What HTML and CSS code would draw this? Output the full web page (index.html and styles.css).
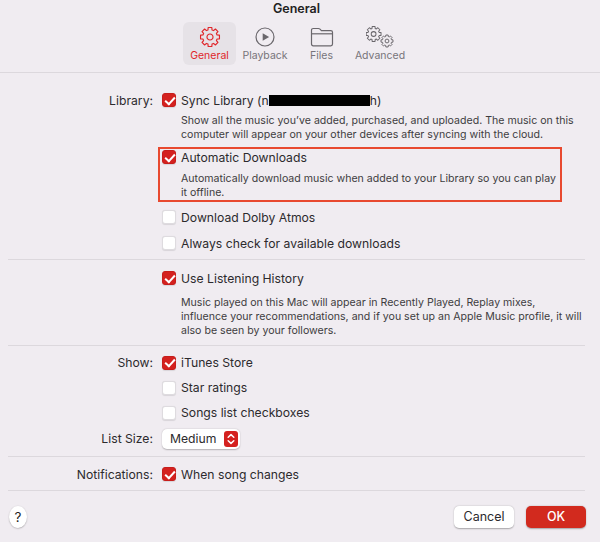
FILE: index.html
```html
<!DOCTYPE html>
<html lang="en">
<head>
<meta charset="utf-8">
<title>General</title>
<link rel="stylesheet" href="styles.css">
</head>
<body>
<div class="window">
  <header class="toolbar">
    <div class="title">General</div>
    <nav class="tabs">
      <div class="tab tab-general active">
        <svg class="tab-icon" viewBox="0 0 24 24" width="22" height="22" fill="none" stroke="currentColor" stroke-width="1.25" stroke-linejoin="round"><g transform="translate(12 12)"><polygon points="-2.2,-7.69 -2,-10.31 2,-10.31 2.2,-7.69 3.88,-6.99 5.88,-8.7 8.7,-5.88 6.99,-3.88 7.69,-2.2 10.31,-2 10.31,2 7.69,2.2 6.99,3.88 8.7,5.88 5.88,8.7 3.88,6.99 2.2,7.69 2,10.31 -2,10.31 -2.2,7.69 -3.88,6.99 -5.88,8.7 -8.7,5.88 -6.99,3.88 -7.69,2.2 -10.31,2 -10.31,-2 -7.69,-2.2 -6.99,-3.88 -8.7,-5.88 -5.88,-8.7 -3.88,-6.99"/><circle r="3.3"/></g></svg>
        <span>General</span>
      </div>
      <div class="tab tab-playback">
        <svg class="tab-icon" viewBox="0 0 24 24" width="22" height="22" fill="none" stroke="currentColor" stroke-width="1.3"><circle cx="12" cy="12" r="9.8"/><path d="M9.5 7.8l7 4.2-7 4.2z" fill="currentColor" stroke="none"/></svg>
        <span>Playback</span>
      </div>
      <div class="tab tab-files">
        <svg class="tab-icon" viewBox="0 0 24 22" width="24" height="22" fill="none" stroke="currentColor" stroke-width="1.2" stroke-linejoin="round"><path d="M1.5 4.2c0-1 .7-1.7 1.7-1.7h5.2c.7 0 1.1.2 1.6.7l1.4 1.4h9.4c1 0 1.7.7 1.7 1.7v11.8c0 1-.7 1.7-1.7 1.7H3.2c-1 0-1.7-.7-1.7-1.7z"/><path d="M1.5 7.8h21"/></svg>
        <span>Files</span>
      </div>
      <div class="tab tab-advanced">
        <svg class="tab-icon" viewBox="0 0 28 22" width="28" height="22" fill="none" stroke="currentColor" stroke-linejoin="round"><g transform="translate(7.6 8) scale(.72)" stroke-width="1.4"><polygon points="-2.2,-7.69 -2,-10.31 2,-10.31 2.2,-7.69 3.88,-6.99 5.88,-8.7 8.7,-5.88 6.99,-3.88 7.69,-2.2 10.31,-2 10.31,2 7.69,2.2 6.99,3.88 8.7,5.88 5.88,8.7 3.88,6.99 2.2,7.69 2,10.31 -2,10.31 -2.2,7.69 -3.88,6.99 -5.88,8.7 -8.7,5.88 -6.99,3.88 -7.69,2.2 -10.31,2 -10.31,-2 -7.69,-2.2 -6.99,-3.88 -8.7,-5.88 -5.88,-8.7 -3.88,-6.99"/><circle r="3.3"/></g><g transform="translate(21 15) scale(.58)" stroke-width="1.7"><polygon points="-2.2,-7.69 -2,-10.31 2,-10.31 2.2,-7.69 3.88,-6.99 5.88,-8.7 8.7,-5.88 6.99,-3.88 7.69,-2.2 10.31,-2 10.31,2 7.69,2.2 6.99,3.88 8.7,5.88 5.88,8.7 3.88,6.99 2.2,7.69 2,10.31 -2,10.31 -2.2,7.69 -3.88,6.99 -5.88,8.7 -8.7,5.88 -6.99,3.88 -7.69,2.2 -10.31,2 -10.31,-2 -7.69,-2.2 -6.99,-3.88 -8.7,-5.88 -5.88,-8.7 -3.88,-6.99"/><circle r="3.3"/></g></svg>
        <span>Advanced</span>
      </div>
    </nav>
  </header>

  <main class="content">
    <section class="section section-library">
      <div class="row">
        <div class="label">Library:</div>
        <div class="box checked"></div>
        <div class="text">Sync Library (n<span class="redact"></span>h)</div>
      </div>
      <p class="desc desc-sync">Show all the music you’ve added, purchased, and uploaded. The music on this computer will appear on your other devices after syncing with the cloud.</p>
      <div class="highlight">
        <div class="row">
          <div class="box checked"></div>
          <div class="text">Automatic Downloads</div>
        </div>
        <p class="desc desc-auto">Automatically download music when added to your Library so you can play it offline.</p>
      </div>
      <div class="row row-dolby">
        <div class="label"></div>
        <div class="box"></div>
        <div class="text">Download Dolby Atmos</div>
      </div>
      <div class="row row-always">
        <div class="label"></div>
        <div class="box"></div>
        <div class="text">Always check for available downloads</div>
      </div>
    </section>

    <section class="section section-history">
      <div class="row">
        <div class="label"></div>
        <div class="box checked"></div>
        <div class="text">Use Listening History</div>
      </div>
      <p class="desc desc-history">Music played on this Mac will appear in Recently Played, Replay mixes,<br>influence your recommendations, and if you set up an Apple Music profile, it will<br>also be seen by your followers.</p>
    </section>

    <section class="section section-show">
      <div class="row">
        <div class="label">Show:</div>
        <div class="box checked"></div>
        <div class="text">iTunes Store</div>
      </div>
      <div class="row">
        <div class="label"></div>
        <div class="box"></div>
        <div class="text">Star ratings</div>
      </div>
      <div class="row">
        <div class="label"></div>
        <div class="box"></div>
        <div class="text">Songs list checkboxes</div>
      </div>
      <div class="row row-size">
        <div class="label">List Size:</div>
        <div class="select">
          <span>Medium</span>
          <span class="stepper">
            <svg viewBox="0 0 12 14" width="12" height="14" fill="none" stroke="#fff" stroke-width="1.5" stroke-linecap="round" stroke-linejoin="round"><path d="M3.2 5.2L6 2.6l2.8 2.6M3.2 8.8L6 11.4l2.8-2.6"/></svg>
          </span>
        </div>
      </div>
    </section>

    <section class="section section-notify">
      <div class="row">
        <div class="label">Notifications:</div>
        <div class="box checked"></div>
        <div class="text">When song changes</div>
      </div>
    </section>
  </main>

  <footer class="footer">
    <button class="help">?</button>
    <div class="actions">
      <button class="btn">Cancel</button>
      <button class="btn primary">OK</button>
    </div>
  </footer>
</div>
</body>
</html>
```

FILE: styles.css
```css
* { box-sizing: border-box; }
html, body { margin: 0; padding: 0; }
body {
  width: 600px;
  height: 542px;
  overflow: hidden;
  background: #f0ecf1;
  color: #2c2a2d;
  font-family: Inter, "Liberation Sans", sans-serif;
  font-size: 12.2px;
}
.window { display: flex; flex-direction: column; height: 542px; }

.toolbar {
  height: 73px;
  border-bottom: 1px solid #dcd8dd;
  display: flex;
  flex-direction: column;
  align-items: center;
}
.title {
  font-size: 12.5px;
  font-weight: 600;
  color: #222;
  line-height: 16px;
  margin-top: 1px;
  margin-right: 7px;
}
.tabs { display: flex; margin-top: 5px; align-self: flex-start; padding-left: 183px; }
.tab {
  display: flex;
  flex-direction: column;
  align-items: center;
  height: 43px;
  font-size: 10.5px;
  color: #77747a;
  border-radius: 6px;
  padding-top: 4px;
}
.tab span { line-height: 13px; margin-top: 1px; }
.tab-icon { display: block; color: #6a676c; }
.tab-general { width: 53px; }
.tab-playback { width: 58px; }
.tab-files { width: 55px; }
.tab-advanced { width: 62px; }
.tab.active { background: #e6e2e7; color: #e0262a; }
.tab.active .tab-icon { color: #e0262a; }

.content { flex: 0 0 auto; }
.section { border-bottom: 1px solid #dcd8dd; margin: 0 15px 0 8px; }
.section-library { padding-top: 17px; height: 187px; }
.section-history { padding-top: 8px; height: 86px; }
.section-show { padding-top: 4px; height: 111px; }
.section-notify { padding-top: 7px; height: 34px; }

.row { display: flex; align-items: center; height: 20px; }
.section-show .row { height: 25px; }
.section-show .row-size { height: 27px; }
.label {
  width: 145px;
  text-align: right;
  margin-right: 9px;
  flex: none;
  color: #2c2a2d;
}
.box {
  width: 14px;
  height: 14px;
  border-radius: 3px;
  background: #fff;
  border: 1px solid #dedbdf;
  box-shadow: 0 0.5px 1px rgba(0, 0, 0, .1);
  flex: none;
  position: relative;
}
.box.checked { background: #d4211f; border-color: #c71d1b; }
.box.checked::after {
  content: "";
  position: absolute;
  left: 3.6px;
  top: 0.9px;
  width: 4.4px;
  height: 8px;
  border: solid #fff;
  border-width: 0 2.2px 2.2px 0;
  transform: rotate(42deg);
}
.text { margin-left: 5px; white-space: nowrap; }
.redact {
  display: inline-block;
  width: 101px;
  height: 11px;
  background: #000;
  vertical-align: -1px;
}
.desc {
  margin: 0 0 0 173px;
  font-size: 10.6px;
  line-height: 14.2px;
  color: #3e3c40;
}
.desc-sync { padding-top: 4px; width: 412px; height: 34px; }
.highlight {
  margin: 3px 0 5px 150px;
  width: 404px;
  height: 55px;
  border: 2px solid #e8492f;
}
.highlight .box { margin-left: 2px; }
.highlight .row { height: 16px; }
.desc-auto { margin-left: 21px; width: 380px; padding-top: 7px; line-height: 14px; }
.row-dolby { margin-top: 5px; }
.row-always { margin-top: 6px; }
.desc-history { padding-top: 8px; white-space: nowrap; }

.select {
  display: flex;
  align-items: center;
  justify-content: space-between;
  width: 78px;
  height: 20px;
  background: #fff;
  border-radius: 5px;
  box-shadow: 0 0.5px 1.5px rgba(0, 0, 0, .25);
  padding: 0 2px 0 8px;
}
.stepper {
  width: 14px;
  height: 16px;
  background: #d4211f;
  border-radius: 3px;
  display: flex;
  align-items: center;
  justify-content: center;
}

.footer {
  flex: 1;
  display: flex;
  align-items: center;
  justify-content: space-between;
  padding: 0 14px 0 9px;
}
button { font-family: inherit; border: 0; cursor: default; }
.help {
  width: 18px;
  height: 22px;
  border-radius: 50%;
  background: #fff;
  font-size: 13.5px;
  padding: 0;
  color: #222;
  box-shadow: 0 0.5px 1.5px rgba(0, 0, 0, .3);
}
.actions { display: flex; gap: 12px; }
.btn {
  width: 60px;
  height: 22px;
  border-radius: 5px;
  background: #fff;
  font-size: 12.5px;
  color: #2c2a2d;
  padding: 0;
  box-shadow: 0 0.5px 1.5px rgba(0, 0, 0, .3);
}
.btn.primary { background: #d22a1e; color: #fff; font-weight: 500; }
```
